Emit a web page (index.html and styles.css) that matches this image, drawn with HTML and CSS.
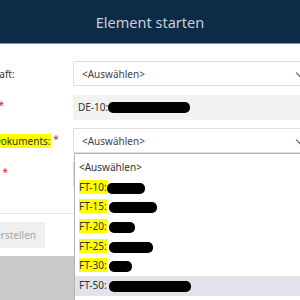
FILE: index.html
```html
<!DOCTYPE html>
<html lang="de">
<head>
  <meta charset="UTF-8"/>
  <title>Element starten</title>
  <link rel="stylesheet" href="styles.css">
</head>
<body>
<div class="dialog">
  <div class="dialog-head">Element starten</div>

  <div class="dialog-body">
    <div class="row">
      <label class="lbl">Gesellschaft:</label>
      <div class="field select">&lt;Auswählen&gt;<span class="chev"></span></div>
    </div>
    <div class="row">
      <label class="lbl">Numme: <span class="req">*</span></label>
      <div class="field readonly">DE-10: <span class="blob blob-de"></span></div>
    </div>
    <div class="row">
      <label class="lbl"><span class="hl">Typ des Dokuments:</span> <span class="req">*</span></label>
      <div class="field select">&lt;Auswählen&gt;<span class="chev"></span></div>
    </div>
    <div class="row">
      <label class="lbl">Vorlagen: <span class="req">*</span></label>
      <div class="field select"><span class="chev"></span></div>
    </div>
  </div>

  <div class="dialog-foot">
    <button class="btn" disabled>Dokument erstellen</button>
  </div>
</div>

<ul class="dropdown">
  <li>&lt;Auswählen&gt;</li>
  <li><span class="hl">FT-10:</span><span class="blob" style="width: 38px"></span></li>
  <li><span class="hl">FT-15:</span> <span class="blob" style="width: 48px"></span></li>
  <li><span class="hl">FT-20:</span> <span class="blob" style="width: 26px"></span></li>
  <li><span class="hl">FT-25:</span> <span class="blob" style="width: 44px"></span></li>
  <li><span class="hl">FT-30:</span> <span class="blob" style="width: 23px"></span></li>
  <li class="active">FT-50: <span class="blob" style="width: 82px"></span></li>
</ul>
</body>
</html>
```

FILE: styles.css
```css
body {
    margin: 0;
    background-color: #c9c9c9;
    font-family: "Noto Sans", sans-serif;
    font-size: 10px;
    color: #333;
    overflow: hidden;
    height: 300px;
    position: relative;
}

.dialog {
    width: 385px;
    margin-left: -60px;
    background-color: #fff;
}

.dialog-head {
    height: 43px;
    line-height: 44px;
    background-color: #0c2b47;
    border-bottom: 1px solid #7f95aa;
    color: #c9d0d7;
    font-size: 14.5px;
    text-align: center;
    padding-left: 60px;
    padding-right: 25px;
}

.dialog-body {
    padding: 17px 15px 26px 15px;
    display: flex;
    flex-direction: column;
    gap: 8.5px;
    border-bottom: 1px solid #e4e4e4;
}

.row {
    display: grid;
    grid-template-columns: 118px 1fr;
    align-items: center;
    height: 25px;
}

.lbl {
    color: #333;
    white-space: nowrap;
}

.req {
    color: #e02020;
    position: relative;
    top: -2px;
}

.hl {
    background-color: #ffff00;
}

.field {
    height: 25px;
    box-sizing: border-box;
    border: 1px solid #dedede;
    padding-left: 8px;
    display: flex;
    align-items: center;
    position: relative;
    color: #444;
}

.readonly {
    background-color: #f2f2f2;
    border-color: #f2f2f2;
    padding-left: 4px;
    color: #333;
}

.chev {
    position: absolute;
    right: 6px;
    top: 8px;
    width: 5px;
    height: 5px;
    border-right: 1px solid #555;
    border-bottom: 1px solid #555;
    transform: rotate(45deg);
}

.blob {
    display: inline-block;
    height: 11px;
    background-color: #000;
    border-radius: 5px;
    vertical-align: middle;
}

.blob-de {
    width: 82px;
}

.dialog-foot {
    padding: 8px 15px 8px 0;
}

.btn {
    height: 26px;
    width: 105px;
    border: none;
    background-color: #f0f0f0;
    color: #a6a6a6;
    font-family: "Noto Sans", sans-serif;
    font-size: 10px;
    text-align: right;
    padding: 0 9px 0 0;
    white-space: nowrap;
}

.dropdown {
    position: absolute;
    left: 74px;
    top: 153px;
    width: 240px;
    height: 160px;
    margin: 0;
    padding: 4px 0 0 0;
    list-style: none;
    background-color: #fff;
    border: 1px solid #b3b3b3;
    box-sizing: border-box;
}

.dropdown li {
    height: 19.7px;
    line-height: 19.7px;
    padding-left: 4px;
    color: #333;
}

.dropdown li.active {
    background-color: #e2e2ea;
}
```
